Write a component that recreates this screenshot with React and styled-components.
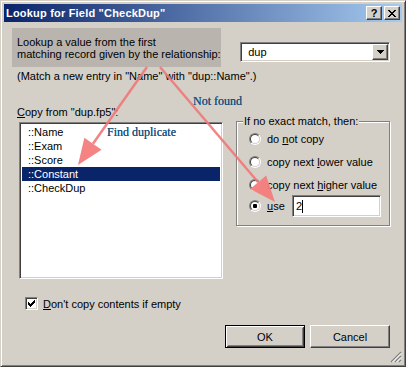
import React from "react";
import styled, { createGlobalStyle, css } from "styled-components";

const GlobalStyle = createGlobalStyle`
  html, body { margin: 0; padding: 0; background: #d4d0c8; }
  body {
    font-family: "Liberation Sans", Arial, sans-serif;
    font-size: 11px;
    color: #000;
  }
  * { box-sizing: border-box; }
`;

const raised = css`
  background: #d4d0c8;
  border: 1px solid;
  border-color: #fff #404040 #404040 #fff;
  box-shadow: inset -1px -1px 0 #808080, inset 1px 1px 0 #d4d0c8;
`;

const sunken = css`
  background: #fff;
  border: 1px solid;
  border-color: #808080 #fff #fff #808080;
  box-shadow: inset 1px 1px 0 #404040, inset -1px -1px 0 #d4d0c8;
`;

const Window = styled.div`
  position: relative;
  width: 406px;
  height: 367px;
  background: #d4d0c8;
  border: 1px solid;
  border-color: #d4d0c8 #404040 #404040 #d4d0c8;
  box-shadow: inset 1px 1px 0 #fff, inset -1px -1px 0 #808080;
  padding: 3px;
  display: flex;
  flex-direction: column;
`;

const TitleBar = styled.div`
  height: 18px;
  display: flex;
  align-items: center;
  padding: 0 2px;
  background: linear-gradient(to right, #0a246a, #a6caf0);
`;

const Title = styled.div`
  flex: 1;
  color: #fff;
  font-weight: bold;
  font-size: 11px;
  white-space: nowrap;
  letter-spacing: 0.2px;
`;

const TitleButton = styled.div`
  ${raised}
  width: 16px;
  height: 14px;
  margin-left: 2px;
  display: flex;
  align-items: center;
  justify-content: center;
  font-weight: bold;
  font-size: 11px;
  line-height: 12px;
`;

const Body = styled.div`
  flex: 1;
  display: flex;
  flex-direction: column;
  padding: 6px 12px 0 4px;
`;

const TopRow = styled.div`
  display: flex;
  align-items: flex-start;
`;

const InfoBox = styled.div`
  margin-left: 4px;
  width: 211px;
  height: 39px;
  background: #b9b5ae;
  padding: 8px 0 0 5px;
  line-height: 12px;
`;

const Combo = styled.div`
  ${sunken}
  margin-left: 19px;
  margin-top: 14px;
  width: 151px;
  height: 20px;
  padding: 1px;
  display: flex;
  align-items: center;
`;

const ComboText = styled.div`
  flex: 1;
  padding-left: 6px;
`;

const ComboButton = styled.div`
  ${raised}
  width: 16px;
  height: 16px;
  display: flex;
  align-items: center;
  justify-content: center;
`;

const Line = styled.div`
  line-height: 13px;
  white-space: nowrap;
`;

const MatchText = styled(Line)`
  margin-top: 3px;
  padding-left: 9px;
`;

const MainRow = styled.div`
  display: flex;
  align-items: flex-start;
  margin-top: 23px;
`;

const LeftCol = styled.div`
  margin-left: 9px;
  display: flex;
  flex-direction: column;
`;

const ListBox = styled.div`
  ${sunken}
  margin-top: 3px;
  margin-left: 2px;
  width: 204px;
  height: 157px;
  padding: 2px;
`;

const ListItem = styled.div`
  height: 14px;
  line-height: 14px;
  padding-left: 6px;
  white-space: nowrap;
  background: ${(p) => (p.$selected ? "#0a246a" : "transparent")};
  color: ${(p) => (p.$selected ? "#fff" : "#000")};
`;

const GroupBox = styled.div`
  margin-left: 13px;
  margin-top: 15px;
  width: 156px;
  height: 105px;
  border: 1px solid #808080;
  box-shadow: inset 1px 1px 0 #fff, 1px 1px 0 #fff;
  display: flex;
  flex-direction: column;
`;

const Legend = styled.span`
  align-self: flex-start;
  margin: -7px 0 0 6px;
  padding: 0 1px;
  background: #d4d0c8;
  line-height: 13px;
  white-space: nowrap;
`;

const RadioList = styled.div`
  display: flex;
  flex-direction: column;
  margin-top: -1px;
  padding: 0 8px 0 12px;
`;

const RadioRow = styled.div`
  display: flex;
  align-items: center;
  height: ${(p) => (p.$tight ? "22px" : "23px")};
  margin-top: ${(p) => (p.$tight ? "-1px" : "0")};
  white-space: nowrap;
`;

const RadioOuter = styled.span`
  width: 12px;
  height: 12px;
  border-radius: 50%;
  border: 1px solid;
  border-color: #808080 #fff #fff #808080;
  display: flex;
  flex: none;
`;

const RadioInner = styled.span`
  flex: 1;
  border-radius: 50%;
  border: 1px solid;
  border-color: #404040 #d4d0c8 #d4d0c8 #404040;
  background: #fff;
  display: flex;
  align-items: center;
  justify-content: center;
`;

const RadioDot = styled.span`
  width: 4px;
  height: 4px;
  border-radius: 1px;
  background: #000;
`;

const RadioLabel = styled.span`
  margin-left: 6px;
`;

const U = styled.span`
  text-decoration: underline;
  text-underline-offset: 1px;
`;

const TextInput = styled.div`
  ${sunken}
  margin-left: auto;
  width: 89px;
  height: 22px;
  padding: 0 3px;
  display: flex;
  align-items: center;
`;

const Caret = styled.span`
  width: 1px;
  height: 13px;
  background: #000;
`;

const CheckRow = styled.div`
  display: flex;
  align-items: center;
  margin-top: 18px;
  padding-left: 17px;
`;

const CheckBox = styled.span`
  ${sunken}
  width: 13px;
  height: 13px;
  display: flex;
  align-items: center;
  justify-content: center;
  flex: none;
`;

const CheckLabel = styled.span`
  margin-left: 5px;
`;

const ButtonRow = styled.div`
  display: flex;
  justify-content: flex-end;
  gap: 5px;
  margin-top: 15px;
`;

const Button = styled.div`
  width: 80px;
  height: 23px;
  display: flex;
  align-items: center;
  justify-content: center;
  background: #d4d0c8;
  ${(p) =>
    p.$default
      ? css`
          border: 1px solid #000;
          box-shadow: inset 1px 1px 0 #fff, inset -1px -1px 0 #404040,
            inset 2px 2px 0 #d4d0c8, inset -2px -2px 0 #808080;
        `
      : raised}
`;

const Grip = styled.svg`
  position: absolute;
  right: 3px;
  bottom: 3px;
`;

const Overlay = styled.div`
  position: absolute;
  left: -1px;
  top: -1px;
  width: 406px;
  height: 367px;
  pointer-events: none;
`;

const Annotation = styled.div`
  position: absolute;
  font-family: "Liberation Serif", "Times New Roman", serif;
  font-size: 12px;
  line-height: 14px;
  color: #1b5380;
  white-space: nowrap;
  text-shadow: 0 0 0.4px #1b5380;
`;

const ArrowSvg = styled.svg`
  position: absolute;
  left: 0;
  top: 0;
`;

function arrow(x1, y1, x2, y2, len = 26, half = 10.5) {
  const dx = x2 - x1;
  const dy = y2 - y1;
  const l = Math.hypot(dx, dy);
  const ux = dx / l;
  const uy = dy / l;
  const bx = x2 - ux * len;
  const by = y2 - uy * len;
  const nx = -uy;
  const ny = ux;
  return {
    line: `M${x1} ${y1}L${bx} ${by}`,
    head: `M${x2} ${y2}L${bx + nx * half} ${by + ny * half}L${bx - nx * half} ${by - ny * half}Z`,
  };
}

const a1 = arrow(147, 67, 78, 165);
const a2 = arrow(160, 67, 275, 202);

const CloseGlyph = () => (
  <svg width="8" height="7" viewBox="0 0 8 7" shapeRendering="crispEdges">
    <path
      fill="#000"
      d="M0 0h2v1h-2zM6 0h2v1h-2zM1 1h2v1h-2zM5 1h2v1h-2zM2 2h4v1h-4zM3 3h2v1h-2zM2 4h4v1h-4zM1 5h2v1h-2zM5 5h2v1h-2zM0 6h2v1h-2zM6 6h2v1h-2z"
    />
  </svg>
);

const CheckGlyph = () => (
  <svg width="7" height="7" viewBox="0 0 7 7" shapeRendering="crispEdges">
    <path
      fill="#000"
      d="M6 0h1v1h-1zM5 1h2v1h-2zM0 2h1v1h-1zM4 2h3v1h-3zM0 3h2v1h-2zM3 3h3v1h-3zM0 4h5v1h-5zM1 5h3v1h-3zM2 6h1v1h-1z"
    />
  </svg>
);

const DownGlyph = () => (
  <svg width="7" height="4" viewBox="0 0 7 4" shapeRendering="crispEdges">
    <path fill="#000" d="M0 0h7v1h-7zM1 1h5v1h-5zM2 2h3v1h-3zM3 3h1v1h-1z" />
  </svg>
);

const Radio = ({ checked }) => (
  <RadioOuter>
    <RadioInner>{checked && <RadioDot />}</RadioInner>
  </RadioOuter>
);

const fields = ["::Name", "::Exam", "::Score", "::Constant", "::CheckDup"];

export default function App() {
  return (
    <>
      <GlobalStyle />
      <Window>
        <TitleBar>
          <Title>Lookup for Field "CheckDup"</Title>
          <TitleButton>?</TitleButton>
          <TitleButton>
            <CloseGlyph />
          </TitleButton>
        </TitleBar>
        <Body>
          <TopRow>
            <InfoBox>
              Lookup a value from the first
              <br />
              matching record given by the relationship:
            </InfoBox>
            <Combo>
              <ComboText>dup</ComboText>
              <ComboButton>
                <DownGlyph />
              </ComboButton>
            </Combo>
          </TopRow>
          <MatchText>(Match a new entry in "Name" with "dup::Name".)</MatchText>
          <MainRow>
            <LeftCol>
              <Line>
                <U>C</U>opy from "dup.fp5":
              </Line>
              <ListBox>
                {fields.map((f) => (
                  <ListItem key={f} $selected={f === "::Constant"}>
                    {f}
                  </ListItem>
                ))}
              </ListBox>
            </LeftCol>
            <GroupBox>
              <Legend>If no exact match, then:</Legend>
              <RadioList>
                <RadioRow>
                  <Radio />
                  <RadioLabel>
                    do <U>n</U>ot copy
                  </RadioLabel>
                </RadioRow>
                <RadioRow>
                  <Radio />
                  <RadioLabel>
                    copy next <U>l</U>ower value
                  </RadioLabel>
                </RadioRow>
                <RadioRow>
                  <Radio />
                  <RadioLabel>
                    copy next <U>h</U>igher value
                  </RadioLabel>
                </RadioRow>
                <RadioRow $tight>
                  <Radio checked />
                  <RadioLabel>
                    <U>u</U>se
                  </RadioLabel>
                  <TextInput>
                    2
                    <Caret />
                  </TextInput>
                </RadioRow>
              </RadioList>
            </GroupBox>
          </MainRow>
          <CheckRow>
            <CheckBox>
              <CheckGlyph />
            </CheckBox>
            <CheckLabel>
              <U>D</U>on't copy contents if empty
            </CheckLabel>
          </CheckRow>
          <ButtonRow>
            <Button $default>OK</Button>
            <Button>Cancel</Button>
          </ButtonRow>
        </Body>
        <Grip width="12" height="12" viewBox="0 0 12 12">
          <path
            d="M11 1L1 11M11 5L5 11M11 9L9 11"
            stroke="#808080"
            strokeWidth="1.2"
          />
          <path
            d="M11 2.5L2.5 11M11 6.5L6.5 11M11 10.5L10.5 11"
            stroke="#fff"
            strokeWidth="1"
          />
        </Grip>
        <Overlay>
          <Annotation style={{ left: 193, top: 94 }}>Not found</Annotation>
          <Annotation style={{ left: 107, top: 125 }}>Find duplicate</Annotation>
          <ArrowSvg width="406" height="367" viewBox="0 0 406 367">
            <g stroke="#f07878" strokeWidth="2.5" strokeOpacity="0.9" fill="none">
              <path d={a1.line} />
              <path d={a2.line} />
            </g>
            <g fill="#f47c7c" fillOpacity="0.95">
              <path d={a1.head} />
              <path d={a2.head} />
            </g>
          </ArrowSvg>
        </Overlay>
      </Window>
    </>
  );
}
